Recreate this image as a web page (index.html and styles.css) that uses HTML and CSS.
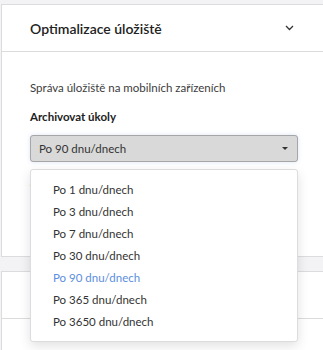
FILE: index.html
```html
<!DOCTYPE html>
<html lang="cs">
<head>
    <meta charset="UTF-8">
    <meta name="viewport" content="width=device-width, initial-scale=1.0">
    <title>Optimalizace úložiště</title>
    <link rel="stylesheet" href="styles.css">
</head>
<body>
    <div class="page">
        <div class="card">
            <div class="card-header">
                <span class="card-title">Optimalizace úložiště</span>
                <svg class="chevron" width="9" height="6" viewBox="0 0 9 6">
                    <path d="M1 1l3.5 3.5L8 1" fill="none" stroke="#333" stroke-width="1.3"/>
                </svg>
            </div>
            <div class="card-body">
                <p class="hint">Správa úložiště na mobilních zařízeních</p>
                <div class="field">
                    <label class="field-label">Archivovat úkoly</label>
                    <div class="select open">
                        <span>Po 90 dnu/dnech</span>
                        <span class="caret"></span>
                    </div>
                    <ul class="dropdown">
                        <li>Po 1 dnu/dnech</li>
                        <li>Po 3 dnu/dnech</li>
                        <li>Po 7 dnu/dnech</li>
                        <li>Po 30 dnu/dnech</li>
                        <li class="selected">Po 90 dnu/dnech</li>
                        <li>Po 365 dnu/dnech</li>
                        <li>Po 3650 dnu/dnech</li>
                    </ul>
                </div>
                <div class="field">
                    <label class="field-label">Archivovat soubory</label>
                    <div class="select tall">
                        <span>Po 90 dnu/dnech</span>
                        <span class="caret"></span>
                    </div>
                </div>
            </div>
        </div>
        <div class="card">
            <div class="card-header"></div>
            <div class="card-body"></div>
        </div>
    </div>
</body>
</html>
```

FILE: styles.css
```css
html, body {
    margin: 0;
    padding: 0;
    background-color: #f3f3f5;
    font-family: Lato, "Noto Sans", sans-serif;
    color: #333;
    overflow: hidden;
}
.page {
    width: 360px;
    padding: 4px 0 0 1px;
    display: flex;
    flex-direction: column;
    gap: 14px;
}
.card {
    background-color: #fff;
    border: 1px solid #dcdcdf;
}
.card-header {
    height: 46px;
    display: flex;
    align-items: center;
    padding: 0 0 0 28px;
    border-bottom: 1px solid #dcdcdf;
}
.card-title {
    font-size: 14px;
    font-weight: 600;
    color: #222;
    flex: 1;
}
.chevron {
    margin-right: 66px;
}
.card-body {
    padding: 29px 0 18px 28px;
    min-height: 40px;
}
.hint {
    margin: 0 0 15px;
    font-size: 11.5px;
    line-height: 14px;
    color: #3c3c3c;
}
.field {
    position: relative;
    width: 268px;
}
.field + .field {
    margin-top: 13px;
}
.field-label {
    display: block;
    font-size: 11.5px;
    font-weight: 700;
    line-height: 14px;
    margin-bottom: 11px;
    color: #222;
}
.select {
    height: 25px;
    border: 1px solid #b4b4b4;
    border-radius: 3px;
    background-color: #fff;
    display: flex;
    align-items: center;
    justify-content: space-between;
    padding: 0 9px 0 8px;
    font-size: 11.5px;
}
.select.open {
    background-color: #d9d9d9;
    border-color: #a6a6a6;
    box-shadow: 0 0 4px rgba(110,150,220,0.25);
}
.select.tall {
    height: 44px;
    margin-top: -8px;
}
.caret {
    width: 0;
    height: 0;
    border-left: 3px solid transparent;
    border-right: 3px solid transparent;
    border-top: 3px solid #333;
}
.dropdown {
    position: absolute;
    top: 59px;
    left: 0;
    z-index: 10;
    width: 266px;
    margin: 0;
    padding: 9px 0 8px;
    list-style: none;
    background-color: #fff;
    border: 1px solid #dcdcdf;
    border-radius: 3px;
    box-shadow: 0 4px 12px rgba(0,0,0,0.12);
}
.dropdown li {
    height: 22px;
    line-height: 22px;
    padding-left: 22px;
    font-size: 11.5px;
}
.dropdown li.selected {
    color: #5b8ee0;
}
```
